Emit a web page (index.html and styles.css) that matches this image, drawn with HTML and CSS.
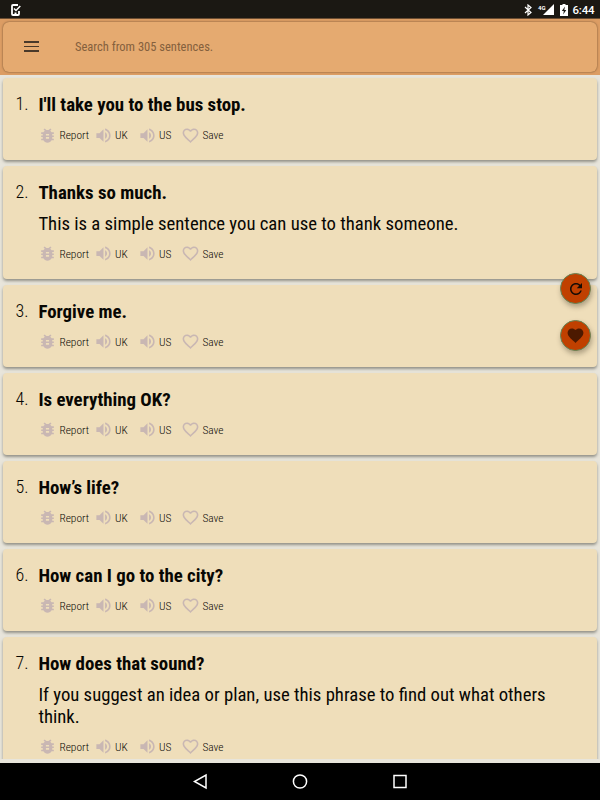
FILE: index.html
```html
<!DOCTYPE html>
<html lang="en">
<head>
  <meta charset="UTF-8" />
  <title>Sentences</title>
  <link rel="stylesheet" href="styles.css">
</head>
<body>
  <svg class="sprite" width="0" height="0">
    <symbol id="bug" viewBox="0 0 24 24"><path d="M20 8h-2.810c-.45-.78-1.070-1.450-1.820-1.960L17 4.410 15.590 3l-2.170 2.170C12.960 5.060 12.490 5 12 5s-.96.06-1.410.17L8.410 3 7 4.410l1.620 1.630C7.880 6.550 7.260 7.220 6.810 8H4v2h2.090c-.05.33-.09.66-.09 1v1H4v2h2v1c0 .34.04.67.09 1H4v2h2.810c1.040 1.790 2.970 3 5.190 3s4.150-1.210 5.190-3H20v-2h-2.090c.05-.33.09-.66.09-1v-1h2v-2h-2v-1c0-.34-.04-.67-.09-1H20V8zm-6 8h-4v-2h4v2zm0-4h-4v-2h4v2z"/></symbol>
    <symbol id="volume" viewBox="0 0 24 24"><path d="M3 9v6h4l5 5V4L7 9H3zm13.500 3c0-1.770-1.020-3.290-2.500-4.030v8.050c1.480-.730 2.500-2.250 2.500-4.020zM14 3.230v2.060c2.890.860 5 3.540 5 6.710s-2.110 5.850-5 6.710v2.060c4.010-.910 7-4.490 7-8.770s-2.990-7.860-7-8.770z"/></symbol>
    <symbol id="heart-line" viewBox="0 0 24 24"><path d="M16.500 3c-1.740 0-3.410.81-4.500 2.090C10.910 3.810 9.240 3 7.500 3 4.420 3 2 5.420 2 8.500c0 3.780 3.400 6.860 8.550 11.540L12 21.350l1.450-1.320C18.600 15.360 22 12.280 22 8.500 22 5.420 19.580 3 16.500 3zm-4.400 15.550l-.1.1-.1-.1C7.140 14.240 4 11.390 4 8.500 4 6.500 5.500 5 7.500 5c1.540 0 3.040.99 3.570 2.360h1.870C13.460 5.990 14.960 5 16.500 5c2 0 3.500 1.500 3.500 3.500 0 2.890-3.140 5.740-7.900 10.050z"/></symbol>
    <symbol id="heart" viewBox="0 0 24 24"><path d="M12 21.350l-1.450-1.320C5.400 15.360 2 12.280 2 8.500 2 5.420 4.420 3 7.500 3c1.740 0 3.410.81 4.500 2.090C13.090 3.810 14.760 3 16.500 3 19.580 3 22 5.420 22 8.500c0 3.780-3.400 6.860-8.550 11.540L12 21.350z"/></symbol>
    <symbol id="refresh" viewBox="0 0 24 24"><path d="M17.650 6.350C16.200 4.900 14.210 4 12 4c-4.420 0-7.990 3.580-7.990 8s3.570 8 7.990 8c3.730 0 6.840-2.550 7.730-6h-2.080c-.82 2.330-3.040 4-5.650 4-3.310 0-6-2.690-6-6s2.690-6 6-6c1.660 0 3.140.69 4.220 1.780L13 11h7V4l-2.350 2.350z"/></symbol>
  </svg>

  <div class="status-bar">
    <svg class="status-task" width="10" height="12" viewBox="0 0 10 12"><path d="M7 1H2Q1 1 1 2v8q0 1 1 1h5q1 0 1-1V7" fill="none" stroke="#fff" stroke-width="1.800"/><path d="M3 4.500l2 2L9.300 2M3.500 9.300h2" fill="none" stroke="#fff" stroke-width="1.500"/></svg>
    <div class="status-icons">
      <svg width="8" height="12" viewBox="0 0 8 12"><path d="M1 3l6 5.500L4 11V1l3 2.500L1 9" fill="none" stroke="#fff" stroke-width="1.200"/></svg>
      <span class="network">4G</span>
      <svg class="signal" width="11" height="11" viewBox="0 0 11 11"><path d="M11 0v11H0z" fill="#fff"/></svg>
      <svg class="battery" width="8" height="12" viewBox="0 0 8 12"><path d="M2.500 0h3v1H8v11H0V1h2.500z" fill="#fff"/><path d="M5 2.500L1.800 7h2L3.200 10.500 6.300 6h-2z" fill="#1b1813"/></svg>
      <span class="clock">6:44</span>
    </div>
  </div>

  <div class="header">
    <div class="search-box">
      <div class="menu"><i></i><i></i><i></i></div>
      <span class="placeholder">Search from 305 sentences.</span>
    </div>
  </div>

  <div class="list" id="list"></div>

  <div class="nav-bar">
    <svg width="16" height="18" viewBox="0 0 16 18"><path d="M14 2v13L2.500 8.500z" fill="none" stroke="#fff" stroke-width="1.500"/></svg>
    <svg width="16" height="18" viewBox="0 0 16 18"><circle cx="8" cy="8.500" r="6.600" fill="none" stroke="#fff" stroke-width="1.500"/></svg>
    <svg width="16" height="18" viewBox="0 0 16 18"><rect x="2" y="2.500" width="12" height="12" fill="none" stroke="#fff" stroke-width="1.500"/></svg>
  </div>

  <div class="fabs">
    <div class="fab"><svg width="18" height="18"><use href="#refresh"/></svg></div>
    <div class="fab saved"><svg width="19" height="19"><use href="#heart"/></svg></div>
  </div>

  <script>
    const sentences = [
      { text: "I'll take you to the bus stop." },
      { text: "Thanks so much.", note: "This is a simple sentence you can use to thank someone." },
      { text: "Forgive me." },
      { text: "Is everything OK?" },
      { text: "How’s life?" },
      { text: "How can I go to the city?" },
      { text: "How does that sound?", note: "If you suggest an idea or plan, use this phrase to find out what others think." }
    ];

    const actions = [
      ["report", "bug", "Report"],
      ["uk", "volume", "UK"],
      ["us", "volume", "US"],
      ["save", "heart-line", "Save"]
    ];

    const list = document.getElementById("list");
    sentences.forEach((s, i) => {
      const card = document.createElement("div");
      card.className = "card";
      card.innerHTML =
        `<div class="number">${i + 1}.</div>
        <div class="content">
          <div class="title">${s.text}</div>
          ${s.note ? `<div class="note">${s.note}</div>` : ""}
          <div class="actions">
            ${actions.map(a => `<div class="action ${a[0]}"><svg><use href="#${a[1]}"/></svg><span>${a[2]}</span></div>`).join("")}
          </div>
        </div>`;
      list.appendChild(card);
    });
  </script>
</body>
</html>
```
FILE: styles.css
```css
* {
  box-sizing: border-box;
}
body {
  margin: 0;
  width: 600px;
  height: 800px;
  overflow: hidden;
  display: flex;
  flex-direction: column;
  background: #e8e5db;
  font-family: "Roboto Condensed", Roboto, sans-serif;
  font-stretch: 75%;
  color: #080703;
}
.sprite {
  position: absolute;
}
.status-bar {
  height: 19px;
  flex: none;
  display: flex;
  justify-content: space-between;
  background: #1b1813;
  border-bottom: 1px solid #6b4d32;
  padding: 4px 6px 0 11px;
  color: #fff;
}
.status-icons {
  display: flex;
}
.network {
  font: bold 6px Roboto, sans-serif;
  margin-left: 6px;
}
.signal {
  margin: 0 0 0 -3px;
}
.battery {
  margin-left: 6px;
}
.clock {
  font: 500 11.500px/13px Roboto, sans-serif;
  margin: 0 0 0 5px;
  width: 21.500px;
  letter-spacing: -0.200px;
}
.header {
  height: 56px;
  flex: none;
  background: #dc9d64;
  padding: 3px 3px 3px;
}
.search-box {
  height: 50px;
  display: flex;
  align-items: center;
  background: #e5aa70;
  border-radius: 6px;
  padding: 0 0 1px 21px;
  box-shadow: 0 0 2px rgba(70,50,30,0.8);
}
.menu {
  width: 15px;
  display: flex;
  flex-direction: column;
  gap: 3px;
}
.menu i {
  height: 1.500px;
  background: #49392a;
}
.placeholder {
  margin-left: 36px;
  font-size: 12.500px;
  line-height: 16px;
  color: #84603d;
}
.list {
  height: 684px;
  flex: none;
  overflow: hidden;
  padding: 3px 3px 0;
  display: flex;
  flex-direction: column;
  gap: 6px;
}
.card {
  flex: none;
  display: flex;
  background: #efdeba;
  border-radius: 4px;
  padding: 14px 30px 16px 12.500px;
  box-shadow: 0 2px 3px rgba(90,90,80,0.6);
}
.number {
  width: 22.900px;
  font-size: 18px;
  font-weight: 300;
  line-height: 23px;
}
.content {
  flex: 1;
}
.title {
  font-size: 18.850px;
  font-weight: 700;
  line-height: 24px;
  padding-top: 1px;
}
.note {
  font-size: 18.700px;
  line-height: 22.500px;
  padding-top: 8px;
  margin-bottom: 0.500px;
}
.actions {
  display: flex;
  height: 18px;
  margin-top: 9px;
}
.action {
  display: flex;
  align-items: center;
  font-size: 11.400px;
  font-weight: 300;
}
.action svg {
  width: 19px;
  height: 19px;
  fill: #c9b7b3;
  margin-right: 2px;
}
.report {
  width: 55.500px;
}
.uk {
  width: 44px;
}
.us {
  width: 43.500px;
}
.nav-bar {
  height: 37px;
  margin-top: 4px;
  flex: none;
  display: flex;
  justify-content: center;
  gap: 84px;
  padding-top: 10px;
  background: #000;
}
.fabs {
  position: absolute;
  right: 9px;
  top: 273px;
  display: flex;
  flex-direction: column;
  gap: 16px;
}
.fab {
  width: 31px;
  height: 31px;
  border-radius: 50%;
  display: flex;
  align-items: center;
  justify-content: center;
  background: #c04000;
  border: 1px solid #658454;
  box-shadow: 1px 3px 5px rgba(80,70,50,0.4);
  fill: #160c05;
}
.saved {
  fill: #4c1900;
}
```
